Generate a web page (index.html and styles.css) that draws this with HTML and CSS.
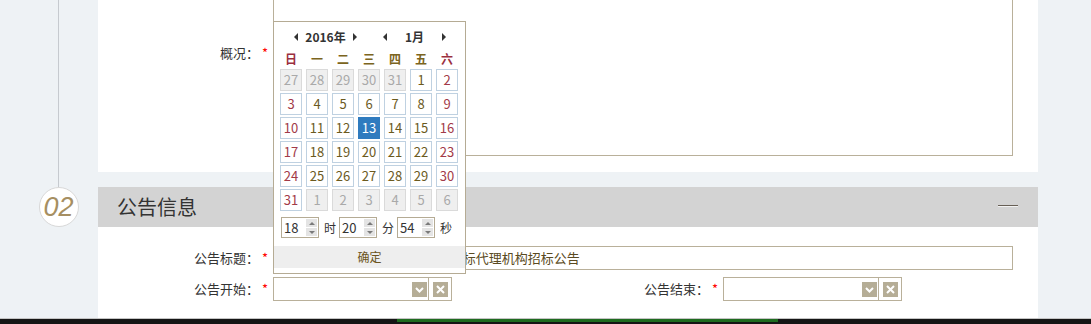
FILE: index.html
```html
<!DOCTYPE html>
<html lang="zh-CN">
<head>
	<meta charset="UTF-8">
	<title>公告信息</title>
	<link rel="stylesheet" href="styles.css">
</head>
<body>
	<div class="page">
		<div class="timeline">
			<span class="rail"></span>
			<span class="step">02</span>
		</div>
		<div class="main">
			<div class="panel panelTop">
				<label class="lbl lblTall">概况：<i>*</i></label>
				<div class="textarea"></div>
			</div>
			<div class="secHead">
				<h2>公告信息</h2>
				<span class="fold"></span>
			</div>
			<div class="panel panelForm">
				<label class="lbl">公告标题：<i>*</i></label>
				<div class="input wide">市公共资源交易中心2016年度招标代理机构招标公告</div>

				<label class="lbl">公告开始：<i>*</i></label>
				<div class="date">
					<div class="dateBox">
						<span class="ico"><svg width="15" height="15" viewBox="0 0 15 15"><path d="M4 6 L7.5 9.5 L11 6" fill="none" stroke="#fff" stroke-width="2"/></svg></span>
					</div>
					<div class="dateClear">
						<span class="ico"><svg width="15" height="15" viewBox="0 0 15 15"><path d="M4 4 L11 11 M11 4 L4 11" fill="none" stroke="#fff" stroke-width="2"/></svg></span>
					</div>

					<!-- 日期选择弹层 -->
					<div class="cal">
						<div class="calHead">
							<div class="calNav"><span class="arrL"></span><b>2016年</b><span class="arrR"></span></div>
							<div class="calNav"><span class="arrL"></span><b>1月</b><span class="arrR"></span></div>
						</div>
						<div class="calWeek">
							<span class="we">日</span><span>一</span><span>二</span><span>三</span><span>四</span><span>五</span><span class="we">六</span>
						</div>
						<div class="calDays">
							<span class="off">27</span><span class="off">28</span><span class="off">29</span><span class="off">30</span><span class="off">31</span><span>1</span><span class="we">2</span>
							<span class="we">3</span><span>4</span><span>5</span><span>6</span><span>7</span><span>8</span><span class="we">9</span>
							<span class="we">10</span><span>11</span><span>12</span><span class="on">13</span><span>14</span><span>15</span><span class="we">16</span>
							<span class="we">17</span><span>18</span><span>19</span><span>20</span><span>21</span><span>22</span><span class="we">23</span>
							<span class="we">24</span><span>25</span><span>26</span><span>27</span><span>28</span><span>29</span><span class="we">30</span>
							<span class="we">31</span><span class="off">1</span><span class="off">2</span><span class="off">3</span><span class="off">4</span><span class="off">5</span><span class="off">6</span>
						</div>
						<div class="calTime">
							<div class="spin">18<span class="spinBtn"><b class="up"></b><b class="down"></b></span></div><em>时</em>
							<div class="spin">20<span class="spinBtn"><b class="up"></b><b class="down"></b></span></div><em>分</em>
							<div class="spin">54<span class="spinBtn"><b class="up"></b><b class="down"></b></span></div><em>秒</em>
						</div>
						<div class="calOk">确定</div>
					</div>
				</div>

				<label class="lbl">公告结束：<i>*</i></label>
				<div class="date">
					<div class="dateBox">
						<span class="ico"><svg width="15" height="15" viewBox="0 0 15 15"><path d="M4 6 L7.5 9.5 L11 6" fill="none" stroke="#fff" stroke-width="2"/></svg></span>
					</div>
					<div class="dateClear">
						<span class="ico"><svg width="15" height="15" viewBox="0 0 15 15"><path d="M4 4 L11 11 M11 4 L4 11" fill="none" stroke="#fff" stroke-width="2"/></svg></span>
					</div>
				</div>
			</div>
		</div>
	</div>
	<div class="footer"><span class="progress"></span></div>
</body>
</html>
```

FILE: styles.css
```css
html,body{margin:0;padding:0;}
body{
	background-color: #eef2f5;
	font-family: "Noto Sans CJK SC", "Liberation Sans", sans-serif;
	font-size: 13px;
	color: #333;
}
.page{
	display: flex;
	height: 318px;
	overflow: hidden;
}

/* 左侧时间轴 */
.timeline{
	width: 98px;
	flex: none;
	display: flex;
	flex-direction: column;
	padding-left: 39px;
	box-sizing: border-box;
}
.rail{
	width: 1px;
	height: 187px;
	margin-left: 19px;
	background-color: #c6cacf;
}
.step{
	width: 40px;
	height: 40px;
	box-sizing: border-box;
	border: 1px solid #d8d8d8;
	border-radius: 50%;
	background-color: #fff;
	display: flex;
	align-items: center;
	justify-content: center;
	font: italic 27px "Liberation Sans", sans-serif;
	color: #a68f62;
	padding-right: 1px;
}

.main{
	width: 940px;
	flex: none;
}
.panel{
	background-color: #fff;
}
.panelTop{
	display: flex;
	height: 172px;
	box-sizing: border-box;
	padding: 0 25px 16px 0;
}
.lbl{
	width: 175px;
	flex: none;
	box-sizing: border-box;
	padding-right: 5px;
	text-align: right;
	line-height: 24px;
	white-space: nowrap;
	font-family: "Noto Sans CJK TC", "Noto Sans CJK SC", sans-serif;
}
.lbl i{
	font-style: normal;
	color: #f00;
	margin-left: 3px;
}
.lblTall{
	padding-top: 43px;
	line-height: 20px;
}
.textarea{
	flex: 1;
	height: 157px;
	margin-top: -1px;
	box-sizing: border-box;
	border: 1px solid #b9b09a;
}

/* 分组标题 */
.secHead{
	margin-top: 15px;
	height: 40px;
	background-color: #d3d3d3;
	display: flex;
	align-items: center;
	justify-content: space-between;
	padding: 0 20px 0 19px;
}
.secHead h2{
	margin: 0;
	font-size: 20px;
	font-weight: normal;
	line-height: 40px;
	color: #333;
}
.fold{
	width: 20px;
	height: 1px;
	background-color: #675f55;
	box-shadow: 0 1px 0 #f2f2f2;
	margin-bottom: 4px;
}

.panelForm{
	display: grid;
	grid-template-columns: 175px 275px 175px 1fr;
	row-gap: 7px;
	padding: 19px 25px 17px 0;
}
.input{
	height: 24px;
	box-sizing: border-box;
	border: 1px solid #b9b09a;
	line-height: 22px;
	padding: 0 4px;
	color: #5a4a22;
	white-space: nowrap;
	overflow: hidden;
}
.wide{
	grid-column: 2 / 5;
}
.date{
	position: relative;
	display: flex;
}
.dateBox{
	width: 156px;
	height: 24px;
	box-sizing: border-box;
	border: 1px solid #b9b09a;
	display: flex;
	align-items: center;
	justify-content: flex-end;
	padding-right: 1px;
}
.dateClear{
	width: 24px;
	height: 24px;
	box-sizing: border-box;
	border: 1px solid #b9b09a;
	margin-left: -1px;
	display: flex;
	align-items: center;
	justify-content: center;
}
.ico{
	width: 15px;
	height: 15px;
	background-color: #b5ad96;
	display: block;
}
.ico svg{display: block;}

/* 日历弹层 */
.cal{
	position: absolute;
	left: 0;
	bottom: calc(100% + 3px);
	width: 193px;
	height: 253px;
	box-sizing: border-box;
	border: 1px solid #b5ab94;
	background-color: #fff;
	font-size: 12px;
	z-index: 2;
}
.calHead{
	display: flex;
	gap: 26px;
	padding: 8px 0 0 20px;
	height: 14px;
	line-height: 14px;
}
.calNav{
	display: flex;
	align-items: center;
}
.calNav b{
	width: 55px;
	text-align: center;
	color: #333;
}
.arrL,.arrR{
	width: 0;
	height: 0;
	border-style: solid;
}
.arrL{
	border-width: 4px 4px 4px 0;
	border-color: transparent #333 transparent transparent;
}
.arrR{
	border-width: 4px 0 4px 4px;
	border-color: transparent transparent transparent #333;
}
.calWeek,.calDays{
	display: grid;
	grid-template-columns: repeat(7, 22px);
	column-gap: 4px;
	padding-left: 6px;
	text-align: center;
}
.calWeek{
	margin-top: 7px;
	line-height: 16px;
	font-weight: bold;
	color: #7b6420;
}
.calWeek .we{
	color: #9b2f3f;
}
.calDays{
	grid-auto-rows: 22px;
	row-gap: 2px;
	margin-top: 2px;
}
.calDays span{
	border: 1px solid #bfd1e1;
	box-sizing: border-box;
	line-height: 20px;
	font-size: 13px;
	color: #6b5a1e;
}
.calDays .we{
	color: #a23a48;
}
.calDays .off{
	background-color: #efefef;
	border-color: #dadada;
	color: #a9a9a9;
}
.calDays .on{
	background-color: #2f7bbf;
	border-color: #2f7bbf;
	color: #fff;
}
.calTime{
	display: flex;
	align-items: center;
	height: 21px;
	margin-top: 6px;
	padding-left: 7px;
}
.spin{
	width: 38px;
	height: 21px;
	box-sizing: border-box;
	border: 1px solid #b5ab94;
	display: flex;
	justify-content: space-between;
	padding-left: 2px;
	line-height: 19px;
	font-size: 13px;
	color: #333;
}
.spinBtn{
	width: 11px;
	margin: 1px;
	display: flex;
	flex-direction: column;
	background-color: #e4e4e4;
}
.spinBtn b{
	flex: 1;
	display: flex;
	align-items: center;
	justify-content: center;
}
.spinBtn b:first-child{
	border-bottom: 1px solid #fff;
}
.spinBtn b::after{
	content: "";
	border-style: solid;
	border-color: transparent;
}
.spinBtn .up::after{
	border-width: 0 3px 3px;
	border-bottom-color: #7a7a7a;
}
.spinBtn .down::after{
	border-width: 3px 3px 0;
	border-top-color: #7a7a7a;
}
.calTime em{
	font-style: normal;
	margin: 0 3px 0 5px;
	color: #333;
}
.calOk{
	margin-top: 8px;
	height: 22px;
	line-height: 22px;
	background-color: #eee;
	text-align: center;
	color: #6b5420;
}

.footer{
	height: 6px;
	box-sizing: border-box;
	border-top: 1px solid #c4c4c4;
	background-color: #151515;
}
.progress{
	display: block;
	width: 381px;
	height: 3px;
	margin-left: 397px;
	background-color: #1e6b1f;
}
```
